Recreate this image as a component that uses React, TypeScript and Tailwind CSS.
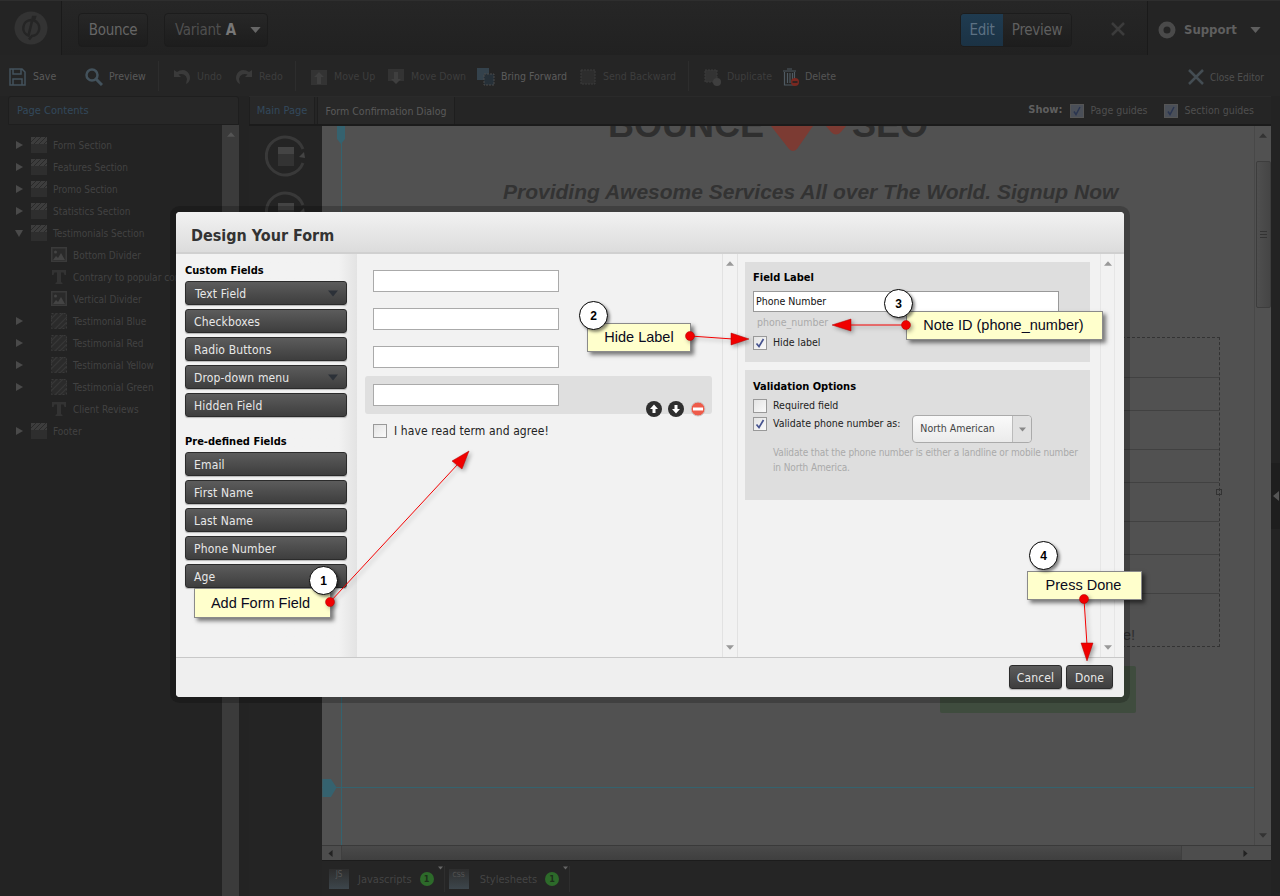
import type { ReactNode } from 'react';

const COND = "font-['DejaVu_Sans_Condensed','DejaVu_Sans',sans-serif]";
const ARIAL = "font-['Liberation_Sans',Arial,sans-serif]";

const Caret = ({ className = '' }: { className?: string }) => (
  <svg viewBox="0 0 12 7" className={className} fill="currentColor">
    <path d="M0 0h12L6 7z" />
  </svg>
);

const Hatch = ({ dashed = false }: { dashed?: boolean }) => (
  <svg viewBox="0 0 16 16" className="w-[16px] h-[16px] shrink-0">
    {dashed ? (
      <>
        <rect x="0.5" y="0.5" width="15" height="15" fill="#2b2b2b" stroke="#3a3a3a" strokeDasharray="2 2" />
        <path d="M0 12L12 0M4 16L16 4M9 16L16 9M0 6L6 0" stroke="#383838" strokeWidth="1.2" />
      </>
    ) : (
      <>
        <rect width="16" height="7" fill="#3d3d3d" />
        <path d="M0 5L5 0M3 7L10 0M8 7L15 0M13 7L16 4" stroke="#2a2a2a" />
        <rect y="7" width="16" height="9" fill="#2e2e2e" />
      </>
    )}
  </svg>
);

const PicIcon = () => (
  <svg viewBox="0 0 16 16" className="w-[16px] h-[16px] shrink-0">
    <rect width="16" height="15" fill="#3a3a3a" />
    <rect x="1.5" y="1.5" width="13" height="12" fill="#2a2a2a" />
    <circle cx="4.5" cy="5" r="1.5" fill="#444" />
    <path d="M2 13l3-4 2 2 3-5 4 7z" fill="#444" />
  </svg>
);

const TIcon = () => (
  <svg viewBox="0 0 16 16" className="w-[16px] h-[16px] shrink-0" fill="#333">
    <path d="M1 1h14v5h-1.500l-1-2.500H10V13l1.500 1v1h-7v-1L6 13V3.500H3.500l-1 2.500H1z" />
  </svg>
);

type TreeRow = { label: string; level: 0 | 1; arrow?: 'right' | 'down'; icon: 'hatch' | 'dash' | 'pic' | 't' };

const TREE: TreeRow[] = [
  { label: 'Form Section', level: 0, arrow: 'right', icon: 'hatch' },
  { label: 'Features Section', level: 0, arrow: 'right', icon: 'hatch' },
  { label: 'Promo Section', level: 0, arrow: 'right', icon: 'hatch' },
  { label: 'Statistics Section', level: 0, arrow: 'right', icon: 'hatch' },
  { label: 'Testimonials Section', level: 0, arrow: 'down', icon: 'hatch' },
  { label: 'Bottom Divider', level: 1, icon: 'pic' },
  { label: 'Contrary to popular conception', level: 1, icon: 't' },
  { label: 'Vertical Divider', level: 1, icon: 'pic' },
  { label: 'Testimonial Blue', level: 1, arrow: 'right', icon: 'dash' },
  { label: 'Testimonial Red', level: 1, arrow: 'right', icon: 'dash' },
  { label: 'Testimonial Yellow', level: 1, arrow: 'right', icon: 'dash' },
  { label: 'Testimonial Green', level: 1, arrow: 'right', icon: 'dash' },
  { label: 'Client Reviews', level: 1, icon: 't' },
  { label: 'Footer', level: 0, arrow: 'right', icon: 'hatch' },
];

const ToolItem = ({ icon, label, className = '', text = 'text-[#444]' }: { icon: ReactNode; label: string; className?: string; text?: string }) => (
  <div className={`flex items-center shrink-0 ${className}`}>
    <svg viewBox="0 0 18 18" className="w-[18px] h-[18px] shrink-0">{icon}</svg>
    <span className={`ml-[6px] text-[10.500px] whitespace-nowrap ${text}`}>{label}</span>
  </div>
);

const Sep = ({ className = '' }: { className?: string }) => <div className={`w-px h-[30px] bg-[#2d2d2d] shrink-0 ${className}`} />;

const FormBtn = ({ label, menu = false, indent = false, center = false }: { label: string; menu?: boolean; indent?: boolean; center?: boolean }) => (
  <div className={`h-[24px] shrink-0 flex items-center rounded-[3px] border border-[#2b2b2b] bg-gradient-to-b from-[#5c5c5c] to-[#3e3e3e] shadow-[0_1px_1px_rgba(0,0,0,.25)] text-[#e8e8e8] text-[12px] tracking-[0.15px] ${center ? 'justify-center' : 'justify-between pr-[8px]'} ${!center && indent ? 'pl-[9px]' : ''} ${!center && !indent ? 'pl-[8px]' : ''}`}>
    <span className="pt-[1px]">{label}</span>
    {menu && <Caret className="w-[10px] h-[7px] text-[#2c3138]" />}
  </div>
);

const Check = ({ on = false, className = '' }: { on?: boolean; className?: string }) => (
  <span className={`w-[14px] h-[14px] shrink-0 border border-[#999] bg-gradient-to-br from-[#e4e4e4] to-[#fafafa] flex items-center justify-center ${className}`}>
    {on && (
      <svg viewBox="0 0 10 10" className="w-[10px] h-[10px]">
        <path d="M1.500 5.500L4 8.500L8.500 1" fill="none" stroke="#46538f" strokeWidth="1.700" />
      </svg>
    )}
  </span>
);

const DimCheck = () => (
  <span className="w-[14px] h-[14px] shrink-0 bg-[#4a4f58] border border-[#555] flex items-center justify-center">
    <svg viewBox="0 0 10 10" className="w-[10px] h-[10px]">
      <path d="M2 5.500L4 8.500L8 1" fill="none" stroke="#2a3550" strokeWidth="1.500" />
    </svg>
  </span>
);

const RoundBtn = ({ dir }: { dir: 'up' | 'down' }) => (
  <svg viewBox="0 0 16 16" className="w-[16px] h-[16px]">
    <circle cx="8" cy="8" r="8" fill="#2f2f2f" />
    <path d={dir === 'up' ? 'M8 3.500L12 8H9.500v4h-3V8H4z' : 'M8 12.500L4 8h2.500V4h3v4H12z'} fill="#fff" />
  </svg>
);

const Callout = ({ num, label, box, badge }: { num: string; label: string; box: string; badge: string }) => (
  <>
    <div className={`absolute flex items-center justify-center bg-[#ffffcc] border border-[#8a8a8a] shadow-[3px_3px_4px_rgba(0,0,0,.5)] text-[14.500px] text-[#0a0a20] ${ARIAL} ${box}`}>
      {label}
    </div>
    <div className={`absolute w-[29px] h-[29px] rounded-full bg-white border-[1.500px] border-black shadow-[2px_2px_3px_rgba(0,0,0,.45)] flex items-center justify-center text-[12px] font-bold text-black ${ARIAL} ${badge}`}>
      {num}
    </div>
  </>
);

const Arrow = ({ line, head, dot }: { line: string; head: string; dot: [number, number] }) => (
  <>
    <path d={line} stroke="#f40000" strokeWidth="1" fill="none" />
    <polygon points={head} fill="#f00000" stroke="#b00000" strokeWidth="0.5" />
    <circle cx={dot[0]} cy={dot[1]} r="4.500" fill="#f00000" stroke="#b00000" strokeWidth="0.5" />
  </>
);

const App = () => {
  return (
    <div className={`relative w-[1280px] h-[896px] overflow-hidden bg-[#232323] text-[#555] ${COND}`}>
      {/* top bar */}
      <header className="h-[55px] flex items-center border-t border-[#2e2e2e] bg-gradient-to-b from-[#262626] to-[#212121]">
        <div className="w-[62px] h-[54px] shrink-0 flex items-center justify-center border-r border-[#1a1a1a] bg-[#242424]">
          <svg viewBox="0 0 34 34" className="w-[34px] h-[34px]">
            <circle cx="17" cy="17" r="16.500" fill="#333" />
            <path d="M17 9a8 8 0 0 0-2.500 15.500L19 6h2l-1 3.500A8 8 0 0 1 18 25l-3 3.500" fill="none" stroke="#252525" strokeWidth="2.500" />
          </svg>
        </div>
        <div className="ml-[16px] mt-[4px] w-[70px] h-[34px] shrink-0 flex items-center justify-center rounded-[4px] border border-[#1c1c1c] bg-gradient-to-b from-[#272727] to-[#1d1d1d] text-[15px] tracking-[-0.3px] text-[#666]">
          Bounce
        </div>
        <div className="ml-[16px] mt-[4px] w-[104px] h-[34px] shrink-0 flex items-center pl-[10px] rounded-[4px] border border-[#1c1c1c] bg-gradient-to-b from-[#272727] to-[#1d1d1d] text-[15px] tracking-[-0.3px] text-[#4f4f4f]">
          Variant <b className="ml-[5px] text-[#777]">A</b>
          <Caret className="ml-[14px] w-[11px] h-[6px] text-[#666]" />
        </div>
        <div className="flex-1" />
        <div className="mt-[4px] w-[112px] h-[34px] shrink-0 flex rounded-[4px] border border-[#1c1c1c] overflow-hidden text-[15px] tracking-[-0.3px]">
          <div className="w-[42px] flex items-center justify-center bg-gradient-to-b from-[#1f3b50] to-[#1b3244] text-[#5d7183]">Edit</div>
          <div className="flex-1 flex items-center justify-center bg-gradient-to-b from-[#272727] to-[#1d1d1d] text-[#5f5f5f]">Preview</div>
        </div>
        <svg viewBox="0 0 14 14" className="ml-[39px] mt-[2px] w-[14px] h-[14px] shrink-0">
          <path d="M1 1l12 12M13 1L1 13" stroke="#3c3c3c" strokeWidth="2.500" />
        </svg>
        <div className="ml-[22px] w-[133px] h-[54px] shrink-0 flex items-center border-l border-[#1a1a1a] bg-[#242424] pl-[10px] pt-[3px]">
          <svg viewBox="0 0 18 18" className="w-[18px] h-[18px] shrink-0">
            <circle cx="9" cy="9" r="6" fill="none" stroke="#4a4a4a" strokeWidth="5" />
          </svg>
          <span className="ml-[8px] text-[13px] font-bold text-[#5f5f5f]">Support</span>
          <Caret className="ml-[13px] w-[11px] h-[6px] text-[#5f5f5f]" />
        </div>
      </header>

      {/* toolbar */}
      <div className="h-[41px] flex items-center pl-[9px] pt-[3px] bg-[#252525]">
        <ToolItem className="w-[76px]" text="text-[#5a5a5a]" icon={<path d="M1 1h12l3 3v13H1z M4 1v5h8V1 M4 11h9v6H4z" fill="none" stroke="#43525c" strokeWidth="1.500" />} label="Save" />
        <ToolItem className="w-[73px]" text="text-[#5a5a5a]" icon={<><circle cx="7" cy="7" r="5.500" fill="none" stroke="#43525c" strokeWidth="2.500" /><path d="M11 11l6 6" stroke="#43525c" strokeWidth="3" /></>} label="Preview" />
        <Sep className="-mt-[3px]" />
        <ToolItem className="ml-[14px] w-[62px]" text="text-[#3d3d3d]" icon={<path d="M1 2v7h7L5.500 6.500A6 6 0 0 1 14 11l-1 5c4-2 5-6 3-10C13.500 1 8 1 4 4z" fill="#3a3a3a" />} label="Undo" />
        <ToolItem className="w-[60px]" text="text-[#3d3d3d]" icon={<path d="M17 2v7h-7l2.500-2.500A6 6 0 0 0 4 11l1 5C1 14 0 10 2 6 4.500 1 10 1 14 4z" fill="#3a3a3a" />} label="Redo" />
        <Sep className="-mt-[3px]" />
        <ToolItem className="ml-[14px] w-[77px]" text="text-[#3d3d3d]" icon={<><rect x="1" y="2" width="16" height="15" fill="#333" /><path d="M9 4l5 5h-3v7H7V9H4z" fill="#3f3f3f" /></>} label="Move Up" />
        <ToolItem className="w-[90px]" text="text-[#3d3d3d]" icon={<><rect x="1" y="1" width="16" height="12" fill="#333" /><path d="M9 16l5-5h-3V4H7v7H4z" fill="#3f3f3f" /></>} label="Move Down" />
        <ToolItem className="w-[102px]" text="text-[#5c5c5c]" icon={<><rect x="0" y="0" width="12" height="12" fill="#34424c" /><rect x="7" y="6" width="10" height="11" fill="#263038" stroke="#4a4a4a" strokeDasharray="2 1" /></>} label="Bring Forward" />
        <ToolItem className="w-[109px]" text="text-[#3d3d3d]" icon={<rect x="2" y="2" width="14" height="14" fill="#2d2d2d" stroke="#3c3c3c" strokeDasharray="2 1" />} label="Send Backward" />
        <Sep className="-mt-[3px]" />
        <ToolItem className="ml-[14px] w-[78px]" text="text-[#3d3d3d]" icon={<><rect x="2" y="2" width="12" height="12" fill="#333" stroke="#3d3d3d" strokeDasharray="2 1" /><circle cx="14" cy="14" r="4" fill="#3f3f3f" /></>} label="Duplicate" />
        <ToolItem text="text-[#555]" icon={<><path d="M2 3h13M6 1h5M3.500 4v13h10V4M6.500 5v10M9 5v10M11.500 5v10" fill="none" stroke="#4f5a62" strokeWidth="1.200" /><circle cx="14" cy="14" r="4" fill="#7a2820" /><rect x="11.500" y="13.200" width="5" height="1.600" fill="#222" /></>} label="Delete" />
        <div className="flex-1" />
        <svg viewBox="0 0 16 16" className="w-[16px] h-[16px] shrink-0">
          <path d="M1 1l14 14M15 1L1 15" stroke="#444d53" strokeWidth="2.500" />
        </svg>
        <span className="ml-[6px] mr-[16px] text-[10px] text-[#4f4f4f]">Close Editor</span>
      </div>

      <div className="flex h-[800px]">
        {/* page contents */}
        <aside className="ml-[8px] w-[231px] shrink-0 flex flex-col">
          <div className="h-[29px] flex items-center pl-[8px] pt-[2px] text-[11px] text-[#33495c] bg-[#272727] border border-[#1e1e1e] rounded-t-[3px]">Page Contents</div>
          <div className="flex-1 flex min-h-0">
            <div className="flex-1 pt-[9px] overflow-hidden">
              {TREE.map((row) => (
                <div key={row.label} className="relative h-[22px] flex items-center whitespace-nowrap text-[10px] text-[#424242]">
                  {row.arrow && (
                    <svg viewBox="0 0 8 8" className="absolute left-[7px] top-[7px] w-[8px] h-[8px]" fill="#4a4a4a">
                      <path d={row.arrow === 'right' ? 'M1 0l7 4-7 4z' : 'M0 1h8L4 8z'} />
                    </svg>
                  )}
                  <div className={`flex items-center gap-[6px] ${row.level === 0 ? 'ml-[23px]' : 'ml-[43px]'}`}>
                    {row.icon === 'hatch' && <Hatch />}
                    {row.icon === 'dash' && <Hatch dashed />}
                    {row.icon === 'pic' && <PicIcon />}
                    {row.icon === 't' && <TIcon />}
                    <span>{row.label}</span>
                  </div>
                </div>
              ))}
            </div>
            <div className="w-[17px] shrink-0 bg-[#3b3b3b] flex justify-center pt-[7px]">
              <Caret className="w-[8px] h-[5px] rotate-180 text-[#555]" />
            </div>
          </div>
        </aside>

        {/* editor */}
        <section className="ml-[10px] w-[1022px] shrink-0 flex flex-col">
          <div className="h-[30px] flex items-end text-[10.500px] bg-[#252525] border-t border-[#2a2a2a] border-b-[2px] border-b-[#1b1b1b]">
            <div className="w-[66px] h-[27px] flex items-center justify-center pt-[2px] text-[11px] text-[#33495c] bg-[#282828] border-x border-[#1e1e1e]">Main Page</div>
            <div className="ml-[2px] w-[138px] h-[27px] flex items-center justify-center pt-[2px] text-[#5a5a5a] bg-[#282828] border-x border-[#1e1e1e]">Form Confirmation Dialog</div>
            <div className="flex-1" />
            <div className="h-[27px] flex items-center pr-[17px] text-[#4f4f4f]">
              <b className="text-[#5f5f5f] text-[11px]">Show:</b>
              <span className="ml-[8px]"><DimCheck /></span>
              <span className="ml-[6px]">Page guides</span>
              <span className="ml-[16px]"><DimCheck /></span>
              <span className="ml-[7px]">Section guides</span>
            </div>
          </div>
          <div className="flex-1 flex min-h-0">
            <div className="w-[73px] shrink-0 bg-[#242424] flex flex-col items-center pt-[9px] gap-[14px]">
              {[0, 1].map((i) => (
                <svg key={i} viewBox="0 0 42 42" className="w-[42px] h-[42px] shrink-0">
                  <path d="M38 14A19 19 0 1 0 38 28" fill="none" stroke="#393939" strokeWidth="3" />
                  <rect x="13" y="12" width="16" height="7" fill="#444" />
                  <rect x="13" y="19" width="16" height="12" fill="#333" />
                  <path d="M34 22l5-5 1 6z" fill="#444" />
                </svg>
              ))}
            </div>
            <div className="flex-1 flex flex-col min-w-0">
              <div className="flex-1 flex min-h-0">
                <div className="relative flex-1 bg-[#515151] overflow-hidden">
                  <div className={`absolute left-[286px] -top-[19px] text-[36px] leading-[36px] font-bold text-[#2f2f2f] ${ARIAL}`}>BOUNCE</div>
                  <svg viewBox="0 0 76 27" className="absolute left-[449px] top-0 w-[76px] h-[27px]">
                    <path d="M0 0H42L26 23Q22 27 18 23ZM55 0H75L70 6Q65 11 60 6Z" fill="#7c3b33" />
                  </svg>
                  <div className={`absolute left-[530px] -top-[19px] text-[36px] leading-[36px] font-bold text-[#2f2f2f] whitespace-nowrap ${ARIAL}`}>SEO</div>
                  <div className={`absolute left-[181px] top-[54px] whitespace-nowrap text-[21px] leading-[24px] font-bold italic text-[#333] ${ARIAL}`}>Providing Awesome Services All over The World. Signup Now</div>
                  <div className="absolute left-[19px] top-0 w-px h-full bg-[#33636f]" />
                  <svg viewBox="0 0 8 18" className="absolute left-[15px] top-0 w-[8px] h-[18px]"><path d="M0 0h8v13l-4 5-4-5z" fill="#35626f" /></svg>
                  <div className="absolute left-0 top-[661px] w-full h-[2px] border-t border-[#33636f]" />
                  <svg viewBox="0 0 15 20" className="absolute left-0 top-[653px] w-[15px] h-[19px]"><path d="M0 0h9l6 9-6 10H0z" fill="#35626f" /></svg>
                  <div className="absolute left-[560px] top-[211px] w-[338px] h-[310px] border border-dashed border-[#333] flex flex-col gap-[32px]">
                    {[0, 1, 2, 3].map((i) => (
                      <div key={i} className="h-[40px] shrink-0 border-y border-[#414141] first:border-t-0" />
                    ))}
                  </div>
                  <div className="absolute left-[894px] top-[363px] w-[6px] h-[6px] border border-[#333]" />
                  <div className={`absolute left-[769px] top-[498px] text-[15px] text-[#2f2f2f] ${ARIAL}`}>Agree!</div>
                  <div className="absolute left-[618px] top-[540px] w-[196px] h-[47px] rounded-[2px] bg-[#3f4c3e]" />
                </div>
                <div className="w-[17px] shrink-0 bg-[#515151] border-l border-[#484848] flex flex-col items-center pt-[7px] pb-[7px]">
                  <Caret className="w-[8px] h-[5px] rotate-180 text-[#333]" />
                  <div className="mt-[23px] w-[15px] h-[147px] shrink-0 flex flex-col items-center justify-center gap-[2px] rounded-[2px] border border-[#3d3d3d] bg-gradient-to-r from-[#4f4f4f] to-[#454545]">
                    <span className="w-[7px] h-px bg-[#333]" />
                    <span className="w-[7px] h-px bg-[#333]" />
                    <span className="w-[7px] h-px bg-[#333]" />
                  </div>
                  <div className="flex-1" />
                  <Caret className="w-[8px] h-[5px] text-[#333]" />
                </div>
              </div>
              <div className="h-[15px] shrink-0 flex items-center bg-[#4d4d4d] border-t border-[#3a3a3a]">
                <Caret className="ml-[5px] w-[7px] h-[5px] rotate-90 text-[#222]" />
                <div className="ml-[7px] w-[841px] h-full border-x border-[#3f3f3f] bg-gradient-to-b from-[#4a4a4a] to-[#3f3f3f]" />
                <div className="flex-1" />
                <Caret className="mr-[22px] w-[7px] h-[5px] -rotate-90 text-[#222]" />
              </div>
            </div>
          </div>
          <div className="h-[36px] shrink-0 bg-[#242424]">
            <div className="ml-[73px] h-full flex items-center text-[11px] text-[#444] bg-[#252525] border-t border-[#1c1c1c]">
              <div className="ml-[7px] w-[20px] h-[20px] bg-gradient-to-b from-[#2d2d2d] to-[#3d464c] text-[8px] text-[#555] text-center leading-[12px]">JS</div>
              <span className="ml-[9px] pt-[3px]">Javascripts</span>
              <span className="ml-[8px] w-[14px] h-[14px] rounded-full bg-[#2d6a2a] text-[#1d2f1b] text-[9px] font-bold text-center leading-[14px]">1</span>
              <Caret className="ml-[4px] -mt-[22px] w-[5px] h-[4px] text-[#666]" />
              <span className="ml-[1px] w-px h-[26px] bg-[#2e2e2e]" />
              <div className="ml-[4px] w-[20px] h-[20px] bg-gradient-to-b from-[#2d2d2d] to-[#3d464c] text-[7px] text-[#555] text-center leading-[12px]">CSS</div>
              <span className="ml-[11px] pt-[3px]">Stylesheets</span>
              <span className="ml-[8px] w-[14px] h-[14px] rounded-full bg-[#2d6a2a] text-[#1d2f1b] text-[9px] font-bold text-center leading-[14px]">1</span>
              <Caret className="ml-[4px] -mt-[22px] w-[5px] h-[4px] text-[#666]" />
              <span className="ml-[1px] w-px h-[26px] bg-[#2e2e2e]" />
            </div>
          </div>
        </section>
        <div className="flex-1 pt-[367px]">
          <div className="h-[66px] bg-[#1e1e1e] flex items-center justify-center">
            <svg viewBox="0 0 6 10" className="w-[6px] h-[10px]"><path d="M6 0v10L0 5z" fill="#555" /></svg>
          </div>
        </div>
      </div>

      {/* dialog */}
      <div className={`absolute left-[176px] top-[212px] w-[948px] h-[485px] flex flex-col rounded-[4px] bg-[#f2f2f2] shadow-[0_0_0_6px_rgba(0,0,0,.2)] text-[#222] ${COND}`}>
        <div className="h-[42px] shrink-0 flex items-center pl-[15px] pt-[7px] rounded-t-[4px] border-b-[2px] border-[#d0d0d0] bg-gradient-to-b from-[#f2f2f2] to-[#dcdcdc] text-[16px] font-bold text-[#333]">
          Design Your Form
        </div>
        <div className="flex-1 flex min-h-0">
          <div className="w-[181px] shrink-0 flex flex-col pl-[9px] pr-[10px] pt-[9px] bg-gradient-to-r from-[#f2f2f2] from-[90%] to-[#e3e3e3]">
            <div className="h-[15px] text-[11px] font-bold text-black leading-[15px]">Custom Fields</div>
            <div className="mt-[3px] flex flex-col gap-[4px]">
              <FormBtn label="Text Field" menu indent />
              <FormBtn label="Checkboxes" />
              <FormBtn label="Radio Buttons" />
              <FormBtn label="Drop-down menu" menu />
              <FormBtn label="Hidden Field" />
            </div>
            <div className="mt-[17px] h-[15px] text-[11px] font-bold text-black leading-[15px]">Pre-defined Fields</div>
            <div className="mt-[3px] flex flex-col gap-[4px]">
              <FormBtn label="Email" />
              <FormBtn label="First Name" />
              <FormBtn label="Last Name" />
              <FormBtn label="Phone Number" />
              <FormBtn label="Age" />
            </div>
          </div>
          <div className="w-[365px] shrink-0 flex flex-col pt-[16px]">
            <div className="ml-[16px] flex flex-col gap-[16px]">
              {[0, 1, 2].map((i) => (
                <div key={i} className="w-[186px] h-[22px] bg-white border border-[#aaa]" />
              ))}
            </div>
            <div className="relative ml-[8px] mt-[8px] w-[347px] h-[38px] rounded-[3px] bg-[#dfdfdf] pl-[8px] pt-[8px]">
              <div className="w-[186px] h-[22px] bg-white border border-[#aaa]" />
              <div className="absolute left-[281px] top-[25px] flex gap-[6px]">
                <RoundBtn dir="up" />
                <RoundBtn dir="down" />
                <svg viewBox="0 0 16 16" className="w-[16px] h-[16px]">
                  <circle cx="8" cy="8" r="7" fill="#ee5b4a" stroke="#c9c9c9" />
                  <rect x="3" y="6.500" width="10" height="3" fill="#fff" />
                </svg>
              </div>
            </div>
            <div className="ml-[16px] mt-[8px] flex items-center text-[12px] tracking-[0.1px] text-[#222]">
              <Check />
              <span className="ml-[7px]">I have read term and agree!</span>
            </div>
          </div>
          <div className="w-[16px] shrink-0 border-x border-[#e2e2e2] flex flex-col items-center justify-between py-[7px]">
            <Caret className="w-[8px] h-[5px] rotate-180 text-[#999]" />
            <Caret className="w-[8px] h-[5px] text-[#999]" />
          </div>
          <div className="flex-1 flex flex-col pl-[7px] pr-[10px] pt-[8px] gap-[8px]">
            <div className="h-[100px] shrink-0 bg-[#dedede] pl-[8px] pt-[8px] text-[10.500px]">
              <div className="font-bold text-[11px] text-black leading-[15px]">Field Label</div>
              <div className="mt-[6px] w-[306px] h-[21px] bg-white border border-[#999] flex items-center pl-[2px] text-[#111]">Phone Number</div>
              <div className="mt-[3px] ml-[4px] h-[15px] leading-[15px] text-[#aaa]">phone_number</div>
              <div className="mt-[5px] flex items-center">
                <Check on />
                <span className="ml-[6px] text-[#222]">Hide label</span>
              </div>
            </div>
            <div className="h-[130px] shrink-0 bg-[#dedede] pl-[8px] pt-[9px] text-[10.500px]">
              <div className="font-bold text-[11px] text-black leading-[15px]">Validation Options</div>
              <div className="mt-[5px] flex items-center h-[14px]">
                <Check />
                <span className="ml-[6px]">Required field</span>
              </div>
              <div className="mt-[4px] flex items-start">
                <Check on />
                <span className="ml-[6px] leading-[13px] whitespace-nowrap">Validate phone number as:</span>
                <div className="ml-[12px] -mt-[2px] w-[120px] h-[28px] flex rounded-[4px] border border-[#aaa] bg-gradient-to-b from-[#fafafa] to-[#ebebeb] text-[#444]">
                  <span className="flex-1 flex items-center pl-[7px]">North American</span>
                  <span className="w-[19px] flex items-center justify-center border-l border-[#bbb] bg-[#e0e0e0] rounded-r-[4px]">
                    <Caret className="w-[7px] h-[5px] text-[#888]" />
                  </span>
                </div>
              </div>
              <p className="mt-[2px] ml-[20px] w-[308px] text-[10px] tracking-[-0.13px] leading-[15px] text-[#aaa]">
                Validate that the phone number is either a landline or mobile number in North America.
              </p>
            </div>
          </div>
          <div className="w-[15px] shrink-0 border-x border-[#e6e6e6] flex flex-col items-center justify-between py-[7px]">
            <Caret className="w-[8px] h-[5px] rotate-180 text-[#999]" />
            <Caret className="w-[8px] h-[5px] text-[#999]" />
          </div>
          <div className="w-[9px] shrink-0" />
        </div>
        <div className="h-[40px] shrink-0 flex items-start justify-end gap-[4px] pt-[7px] pr-[11px] border-t border-[#c8c8c8] rounded-b-[4px] bg-[#efefef]">
          <div className="w-[53px]"><FormBtn label="Cancel" center /></div>
          <div className="w-[47px]"><FormBtn label="Done" center /></div>
        </div>
      </div>

      {/* tutorial annotations */}
      <Callout num="1" label="Add Form Field" box="left-[194px] top-[588px] w-[137px] h-[30px] pr-[4px] pt-[1px]" badge="left-[309px] top-[566px]" />
      <Callout num="2" label="Hide Label" box="left-[587px] top-[323px] w-[104px] h-[29px]" badge="left-[579px] top-[301px]" />
      <Callout num="3" label="Note ID (phone_number)" box="left-[906px] top-[311px] w-[197px] h-[29px] pr-[2px]" badge="left-[884px] top-[289px]" />
      <Callout num="4" label="Press Done" box="left-[1027px] top-[571px] w-[115px] h-[29px] pr-[2px]" badge="left-[1029px] top-[541px]" />
      <svg viewBox="0 0 1280 896" className="absolute inset-0 w-[1280px] h-[896px] pointer-events-none drop-shadow-[2px_2px_2px_rgba(0,0,0,.35)]">
        <Arrow line="M330 602L458 464" head="469,451 452,461 462,469" dot={[330, 602]} />
        <Arrow line="M690 336L733 339" head="749,339 731,333 731,345" dot={[690, 336]} />
        <Arrow line="M906 325L850 325" head="832,325 851,319 851,331" dot={[906, 325]} />
        <Arrow line="M1084 599L1087 645" head="1087,661 1081,643 1093,643" dot={[1084, 599]} />
      </svg>
    </div>
  );
};

export default App;
